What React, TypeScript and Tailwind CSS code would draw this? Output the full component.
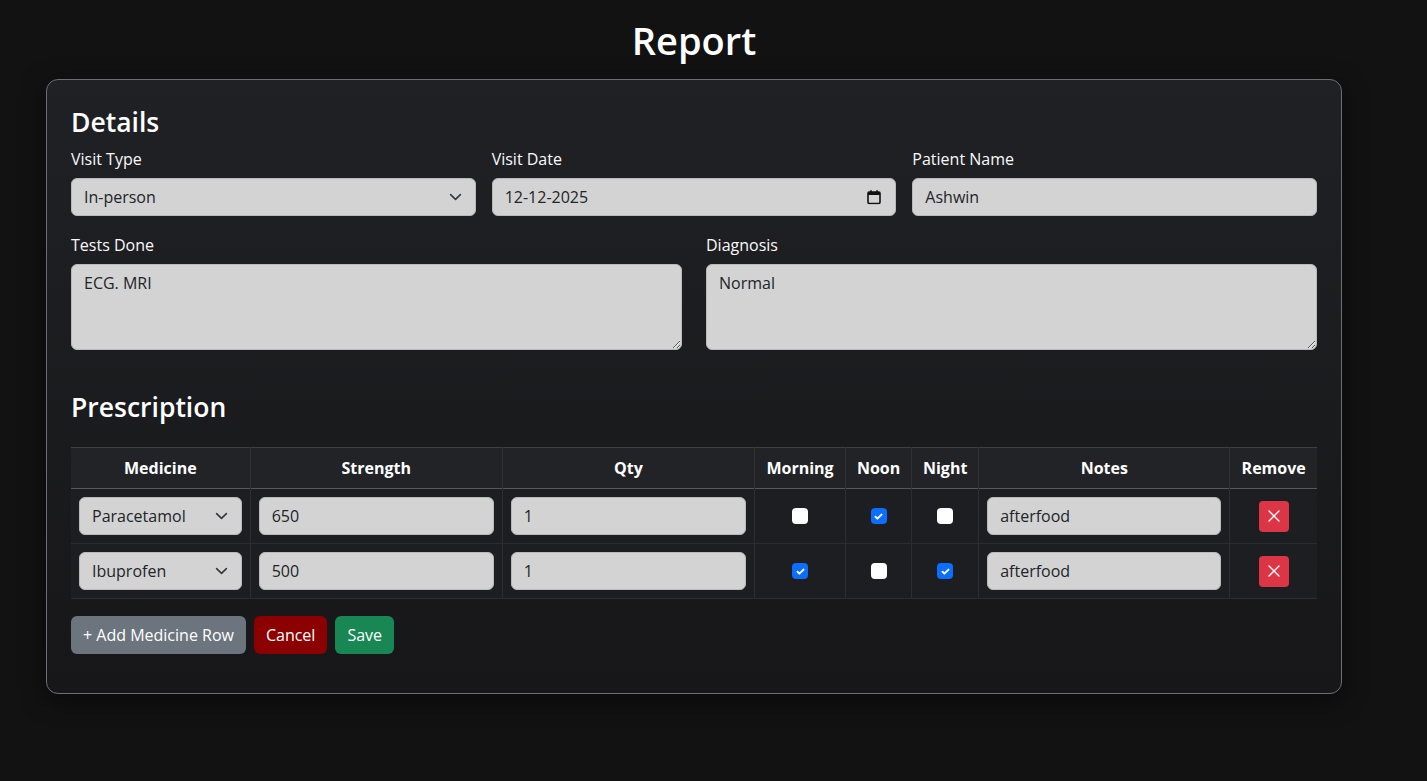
import { FC } from "react";

type Row = {
  medicine: string;
  strength: string;
  qty: string;
  morning: boolean;
  noon: boolean;
  night: boolean;
  notes: string;
};

const ROWS: Row[] = [
  { medicine: "Paracetamol", strength: "650", qty: "1", morning: false, noon: true, night: false, notes: "afterfood" },
  { medicine: "Ibuprofen", strength: "500", qty: "1", morning: true, noon: false, night: true, notes: "afterfood" },
];

const inputCls =
  "block h-[38px] w-full rounded-[6px] border border-[#b9b9b9] bg-[#d3d3d3] px-3 text-[16px] text-[#212529] outline-none";

const Chevron: FC = () => (
  <svg
    className="pointer-events-none absolute right-[14px] top-1/2 -translate-y-1/2"
    width="13"
    height="13"
    viewBox="0 0 16 16"
    fill="none"
    stroke="#343a40"
    strokeWidth="2"
    strokeLinecap="round"
    strokeLinejoin="round"
  >
    <path d="M2 5l6 6 6-6" />
  </svg>
);

const FakeSelect: FC<{ value: string }> = ({ value }) => (
  <div className="relative">
    <input readOnly value={value} className={inputCls} />
    <Chevron />
  </div>
);

const CheckBox: FC<{ checked: boolean }> = ({ checked }) => (
  <span
    className={`mx-auto flex h-4 w-4 items-center justify-center rounded-[4px] ${
      checked ? "bg-[#0d6efd]" : "bg-white"
    }`}
  >
    {checked && (
      <svg width="11" height="11" viewBox="0 0 20 20" fill="none" stroke="#fff" strokeWidth="3.4" strokeLinecap="round" strokeLinejoin="round">
        <path d="M4.5 10.5l3.5 3.5L15.5 6.5" />
      </svg>
    )}
  </span>
);

const Label: FC<{ children: string }> = ({ children }) => (
  <label className="mb-[7px] block text-[16px] leading-6 text-[#f8f9fa]">{children}</label>
);

export default function App() {
  return (
    <div
      className="min-h-[781px] bg-[#121212] pb-10 text-white"
      style={{ fontFamily: '"Open Sans", "Noto Sans", sans-serif' }}
    >
      <div className="ml-[46px] w-[1296px] pt-4">
        <h1 className="mb-[15px] text-center text-[38px] font-semibold leading-[48px] text-white">Report</h1>

        <div className="rounded-[12px] border border-[#6b6e74] bg-gradient-to-b from-[#202124] to-[#17171a] px-[24px] pb-[39px] pt-[25px] shadow-[0_6px_24px_rgba(0,0,0,0.55)]">
          {/* Details */}
          <h2 className="mb-[8px] text-[26.5px] font-semibold leading-[34px]">Details</h2>
          <div className="grid grid-cols-3 gap-4">
            <div>
              <Label>Visit Type</Label>
              <FakeSelect value="In-person" />
            </div>
            <div>
              <Label>Visit Date</Label>
              <div className="relative">
                <input readOnly value="12-12-2025" className={inputCls} />
                <svg
                  className="pointer-events-none absolute right-[15px] top-1/2 -translate-y-1/2"
                  width="14"
                  height="15"
                  viewBox="0 0 14 15"
                  fill="none"
                >
                  <rect x="1" y="2.5" width="12" height="11.5" rx="1.2" stroke="#111" strokeWidth="1.6" />
                  <rect x="1" y="2.5" width="12" height="3" fill="#111" />
                  <path d="M4 0.8v2M10 0.8v2" stroke="#111" strokeWidth="1.6" />
                </svg>
              </div>
            </div>
            <div>
              <Label>Patient Name</Label>
              <input readOnly value="Ashwin" className={inputCls} />
            </div>
          </div>

          <div className="mt-[17px] grid grid-cols-2 gap-6">
            <div>
              <Label>Tests Done</Label>
              <textarea
                readOnly
                value="ECG. MRI"
                className="block h-[86px] w-full rounded-[6px] border border-[#b9b9b9] bg-[#d3d3d3] px-3 py-[6px] text-[16px] text-[#212529] outline-none"
              />
            </div>
            <div>
              <Label>Diagnosis</Label>
              <textarea
                readOnly
                value="Normal"
                className="block h-[86px] w-full rounded-[6px] border border-[#b9b9b9] bg-[#d3d3d3] px-3 py-[6px] text-[16px] text-[#212529] outline-none"
              />
            </div>
          </div>

          {/* Prescription */}
          <h2 className="mb-[23px] mt-[40px] text-[26.5px] font-semibold leading-[34px]">Prescription</h2>
          <table className="w-full table-fixed border-collapse text-[16px]">
            <thead>
              <tr className="border-y border-y-[#3f4043] border-b-[#55575b] bg-[#222327]">
                {[
                  ["Medicine", "w-[179px]"],
                  ["Strength", "w-[252px]"],
                  ["Qty", "w-[252px]"],
                  ["Morning", "w-[91px]"],
                  ["Noon", "w-[66px]"],
                  ["Night", "w-[67px]"],
                  ["Notes", "w-[251px]"],
                  ["Remove", "w-[87px]"],
                ].map(([t, w]) => (
                  <th
                    key={t}
                    className={`${w} border-x border-x-[#2f3033] px-2 py-2 text-center font-bold leading-6 text-white first:border-l-0 last:border-r-0`}
                  >
                    {t}
                  </th>
                ))}
              </tr>
            </thead>
            <tbody>
              {ROWS.map((r, i) => (
                <tr key={i} className="border-b border-b-[#2c2d30] bg-[#1d1e21]">
                  <td className="border-r border-r-[#2c2d30] px-2 py-2">
                    <FakeSelect value={r.medicine} />
                  </td>
                  <td className="border-r border-r-[#2c2d30] px-2 py-2">
                    <input readOnly value={r.strength} className={inputCls} />
                  </td>
                  <td className="border-r border-r-[#2c2d30] px-2 py-2">
                    <input readOnly value={r.qty} className={inputCls} />
                  </td>
                  <td className="border-r border-r-[#2c2d30] px-2 py-2">
                    <CheckBox checked={r.morning} />
                  </td>
                  <td className="border-r border-r-[#2c2d30] px-2 py-2">
                    <CheckBox checked={r.noon} />
                  </td>
                  <td className="border-r border-r-[#2c2d30] px-2 py-2">
                    <CheckBox checked={r.night} />
                  </td>
                  <td className="border-r border-r-[#2c2d30] px-2 py-2">
                    <input readOnly value={r.notes} className={inputCls} />
                  </td>
                  <td className="px-2 py-2">
                    <button className="mx-auto flex h-[31px] w-[30px] items-center justify-center rounded-[4px] bg-[#dc3545]">
                      <svg width="12" height="12" viewBox="0 0 12 12" stroke="#fff" strokeWidth="1.3" strokeLinecap="round">
                        <path d="M1 1l10 10M11 1L1 11" />
                      </svg>
                    </button>
                  </td>
                </tr>
              ))}
            </tbody>
          </table>

          <div className="mt-[17px] flex gap-2">
            <button className="h-[38px] rounded-[6px] bg-[#6c757d] px-3 text-[16px] text-white">+ Add Medicine Row</button>
            <button className="h-[38px] rounded-[6px] bg-[#8b0000] px-3 text-[16px] text-white">Cancel</button>
            <button className="h-[38px] rounded-[6px] bg-[#198754] px-3 text-[16px] text-white">Save</button>
          </div>
        </div>
      </div>
    </div>
  );
}
